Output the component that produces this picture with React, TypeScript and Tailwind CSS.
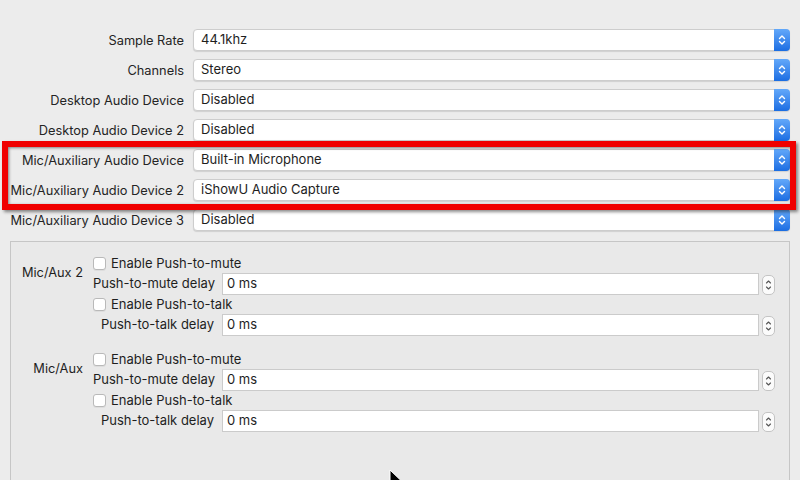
import React from 'react';

const font = { fontFamily: 'Inter, "Liberation Sans", Arial, sans-serif' };

const devices = [
  { label: 'Sample Rate', value: '44.1khz' },
  { label: 'Channels', value: 'Stereo' },
  { label: 'Desktop Audio Device', value: 'Disabled' },
  { label: 'Desktop Audio Device 2', value: 'Disabled' },
  { label: 'Mic/Auxiliary Audio Device', value: 'Built-in Microphone' },
  { label: 'Mic/Auxiliary Audio Device 2', value: 'iShowU Audio Capture' },
  { label: 'Mic/Auxiliary Audio Device 3', value: 'Disabled' },
];

function ComboBox({ value }: { value: string }) {
  return (
    <div className="flex-1 h-[22px] flex items-stretch bg-white rounded-[4px] border border-[#cdcdcd] shadow-[0_1px_1px_rgba(0,0,0,0.12)]">
      <div className="flex-1 flex items-center pl-[7px] text-[13px] text-[#1e1e1e]">{value}</div>
      <div className="w-[16px] -my-px -mr-px rounded-r-[4px] bg-gradient-to-b from-[#62a8fa] to-[#1a6de2] flex items-center justify-center">
        <svg width="16" height="22" viewBox="0 0 16 22" fill="none">
          <path d="M5.5 9.5 L8 7 L10.5 9.5" stroke="white" strokeWidth="1.4" strokeLinecap="round" strokeLinejoin="round" />
          <path d="M5.5 12.5 L8 15 L10.5 12.5" stroke="white" strokeWidth="1.4" strokeLinecap="round" strokeLinejoin="round" />
        </svg>
      </div>
    </div>
  );
}

function CheckRow({ text }: { text: string }) {
  return (
    <div className="h-[19px] flex items-center">
      <div className="w-[13px] h-[13px] rounded-[3px] border border-[#b9b9b9] bg-white shadow-[0_1px_0_rgba(0,0,0,0.05)]" />
      <span className="ml-[5px] text-[13px] text-[#1e1e1e]">{text}</span>
    </div>
  );
}

function SpinRow({ label }: { label: string }) {
  return (
    <div className="h-[22px] flex items-center">
      <div className="w-[122px] text-right text-[13px] text-[#1e1e1e] pr-px whitespace-nowrap">{label}</div>
      <div className="ml-[7px] flex-1 h-[22px] bg-white border border-[#cbcbcb] flex items-center pl-[4px] text-[13px] text-[#1e1e1e]">
        0 ms
      </div>
      <div className="ml-[3px] w-[13px] h-[20px] mt-[2px] rounded-[5px] border border-[#c4c4c4] bg-[#fbfbfb] flex items-center justify-center">
        <svg width="11" height="18" viewBox="0 0 11 18" fill="none">
          <path d="M3.5 7 L5.5 5 L7.5 7" stroke="#555" strokeWidth="1.1" strokeLinecap="round" strokeLinejoin="round" />
          <path d="M3.5 11 L5.5 13 L7.5 11" stroke="#555" strokeWidth="1.1" strokeLinecap="round" strokeLinejoin="round" />
        </svg>
      </div>
    </div>
  );
}

function HotkeySection({ name }: { name: string }) {
  return (
    <div className="flex">
      <div className="w-[72px] text-right text-[12.8px] text-[#1e1e1e] pt-[9px] whitespace-nowrap">{name}</div>
      <div className="ml-[10px] flex-1 flex flex-col">
        <CheckRow text="Enable Push-to-mute" />
        <SpinRow label="Push-to-mute delay" />
        <CheckRow text="Enable Push-to-talk" />
        <SpinRow label="Push-to-talk delay" />
      </div>
    </div>
  );
}

export default function App() {
  return (
    <div className="relative w-[800px] h-[480px] overflow-hidden bg-[#ececec]" style={font}>
      {/* device selects */}
      <div className="pt-[25px] pr-[10px] flex flex-col">
        {devices.map((d) => (
          <div key={d.label} className="h-[30px] flex items-center">
            <div className="w-[184px] text-right text-[12.8px] text-[#242424] whitespace-nowrap pt-px">{d.label}</div>
            <div className="ml-[9px] flex-1 flex">
              <ComboBox value={d.value} />
            </div>
          </div>
        ))}
      </div>

      {/* hotkeys group */}
      <div className="mt-[6px] ml-[10px] mr-[10px] h-[260px] border border-[#c6c6c6] bg-[#e9e9e9] pt-[12px] pr-[14px] flex flex-col gap-[14px]">
        <HotkeySection name="Mic/Aux 2" />
        <HotkeySection name="Mic/Aux" />
      </div>

      {/* highlight */}
      <div className="absolute left-[2px] top-[141px] w-[794px] h-[69px] border-[6px] border-[#f00000] shadow-[2px_2px_3px_rgba(0,0,0,0.45),inset_1px_1px_3px_rgba(0,0,0,0.45)] pointer-events-none" />

      {/* cursor */}
      <svg className="absolute left-[388px] top-[469px]" width="14" height="20" viewBox="0 0 14 20">
        <path d="M2 1 L2 16 L5.5 12.5 L8 18 L10.5 17 L8 11.5 L13 11.5 Z" fill="black" stroke="white" strokeWidth="1" />
      </svg>
    </div>
  );
}
